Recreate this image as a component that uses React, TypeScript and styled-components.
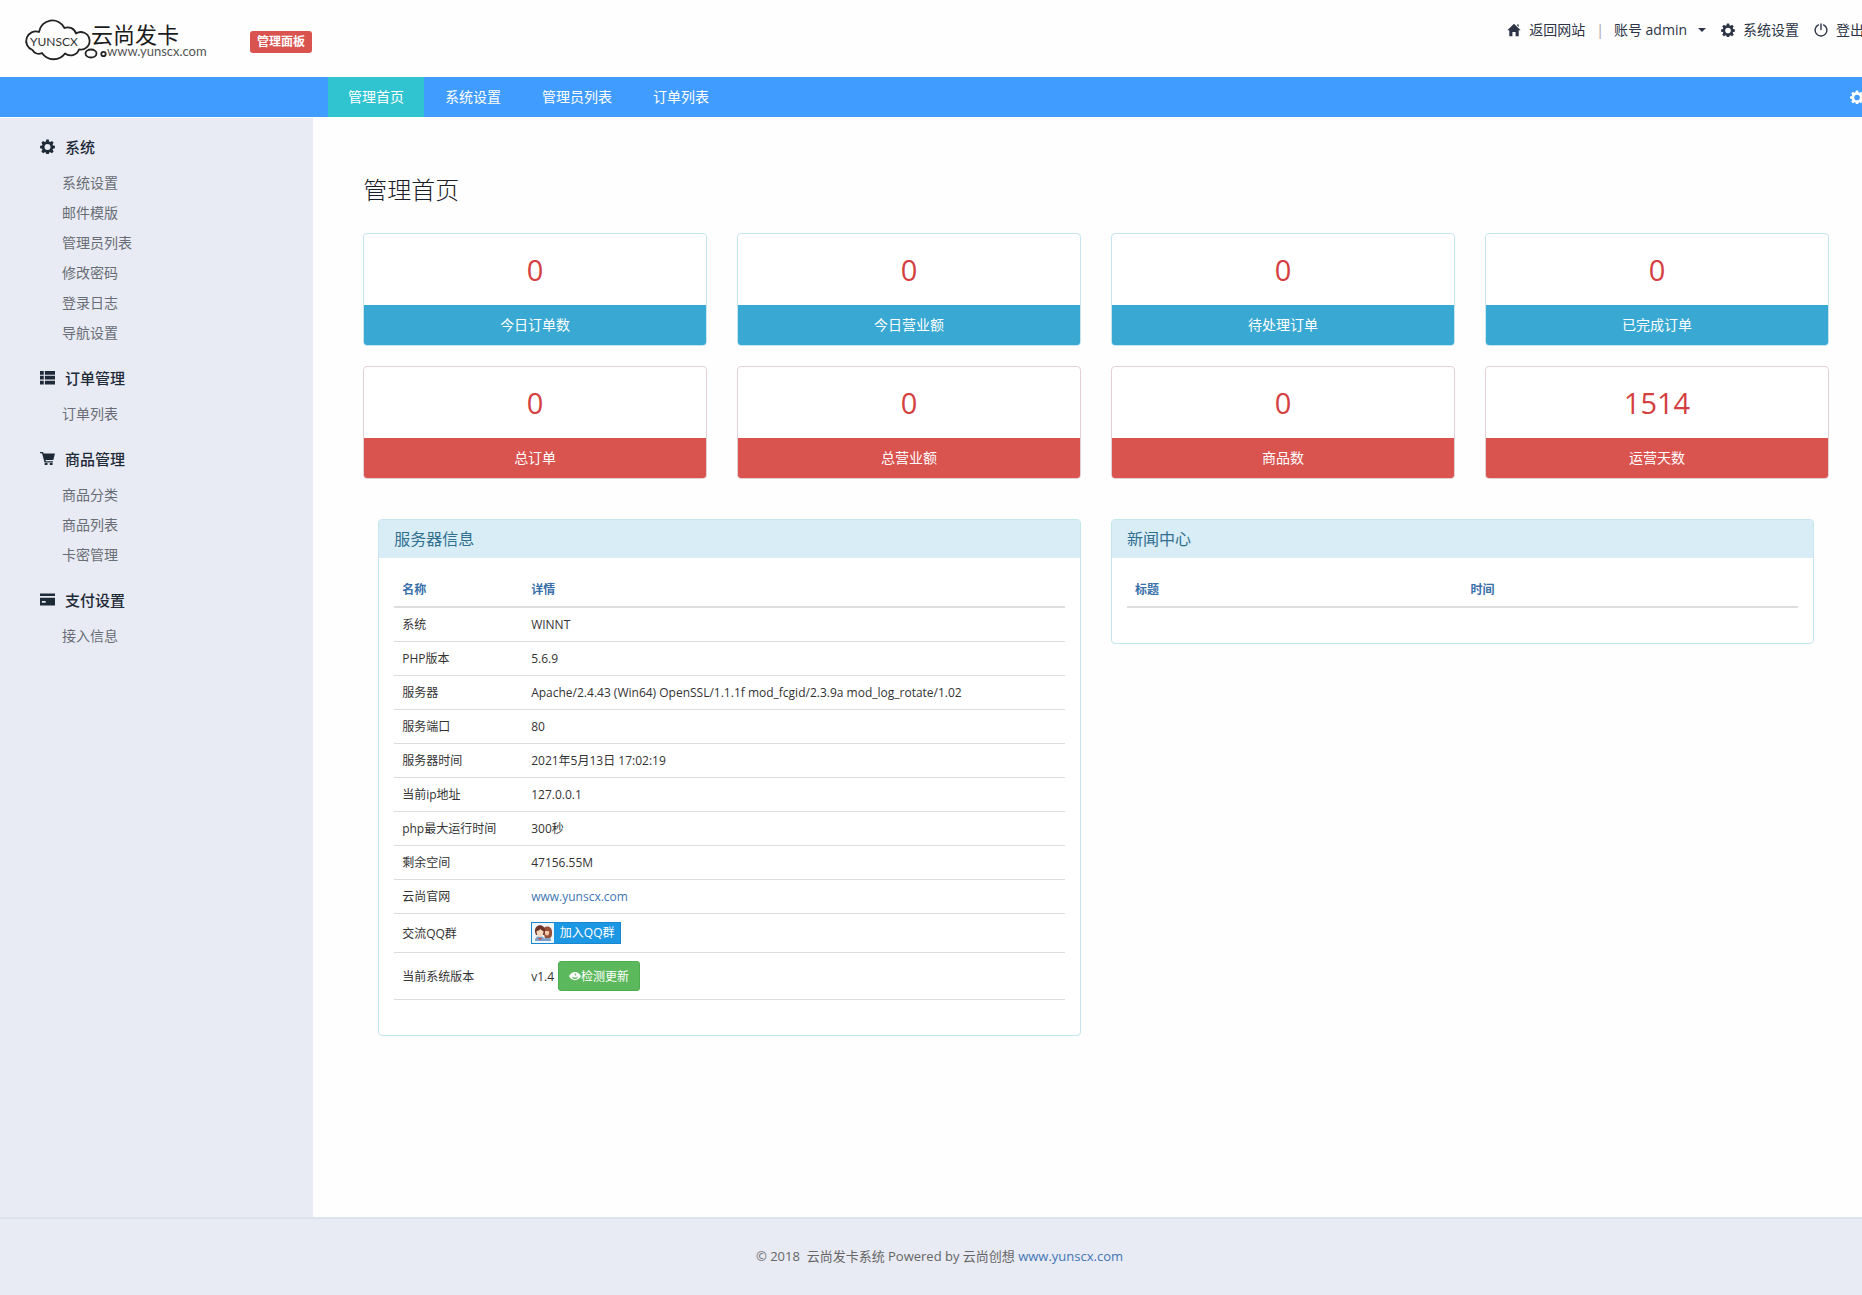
import React from "react";
import styled, { createGlobalStyle } from "styled-components";

const GlobalStyle = createGlobalStyle`
  *, *::before, *::after { box-sizing: border-box; }
  html, body { margin: 0; overflow-x: hidden; }
  body {
    background: #fefefe;
    color: #333;
    font-family: "Open Sans", "Noto Sans CJK SC", sans-serif;
    font-size: 14px;
    line-height: 20px;
  }
  ul { list-style: none; margin: 0; padding: 0; }
  h1, h2, p { margin: 0; font-weight: 400; }
  a { color: inherit; text-decoration: none; }
  button { font: inherit; cursor: pointer; }
`;

const Page = styled.div`
  display: flex;
  flex-direction: column;
  width: calc(100% + 17px);
  min-height: 100vh;
`;

const Header = styled.header`
  display: flex;
  align-items: flex-start;
  height: 77px;
  padding: 0 15px 0 24px;
`;

const LogoLink = styled.a`
  display: block;
  margin-top: 16px;
  height: 46px;
`;

const PanelTag = styled.span`
  margin: 31px 0 0 42px;
  padding: 0 7px;
  border-radius: 3px;
  background: #d9534f;
  color: #fff;
  font-size: 12px;
  font-weight: 700;
  line-height: 22px;
`;

const UserMenu = styled.ul`
  display: flex;
  align-items: center;
  margin-left: auto;
  padding-top: 20px;
  color: #2c3445;
  white-space: nowrap;
`;

const UserItem = styled.li<{ $gap?: number }>`
  display: flex;
  align-items: center;
  margin-left: ${(p) => p.$gap ?? 15}px;
`;

const UserLink = styled.a`
  display: flex;
  align-items: center;
  gap: 8px;
`;

const Divider = styled.span`
  color: #a9a0aa;
  line-height: 20px;
`;

const AccountButton = styled.button`
  display: flex;
  align-items: center;
  gap: 11px;
  padding: 0;
  border: 0;
  background: none;
  color: inherit;
`;

const Caret = styled.span`
  border: 4px solid transparent;
  border-top-color: currentColor;
  border-bottom: 0;
`;

const NavBar = styled.nav`
  display: flex;
  align-items: center;
  height: 40px;
  margin-bottom: 1px;
  padding: 0 15px 0 328px;
  background: #419cff;
  color: #fff;
`;

const Tabs = styled.ul`
  display: flex;
  gap: 1px;
`;

const Tab = styled.a<{ $active?: boolean }>`
  display: block;
  padding: 0 20px;
  line-height: 40px;
  background: ${(p) => (p.$active ? "#30c4d0" : "transparent")};
`;

const NavTool = styled.button`
  display: flex;
  margin-left: auto;
  padding: 0;
  border: 0;
  background: none;
  color: #fff;
`;

const Body = styled.div`
  display: grid;
  grid-template-columns: 1fr 5fr;
  flex: 1;
`;

const Sidebar = styled.aside`
  display: flex;
  flex-direction: column;
  gap: 15px;
  padding: 14px 0 30px 40px;
  background: #e8ebf3;
`;

const GroupTitle = styled.h2`
  display: flex;
  align-items: center;
  gap: 10px;
  height: 29px;
  margin-bottom: 7px;
  color: #1f2a38;
  font-size: 15px;
  font-weight: 500;
`;

const SideLink = styled.a`
  display: block;
  padding-left: 22px;
  color: #686d76;
  line-height: 30px;
`;

const Main = styled.main`
  min-width: 0;
  padding: 55px 50px 60px;
`;

const PageTitle = styled.h1`
  margin-bottom: 26px;
  color: #1c2029;
  font-size: 24px;
  font-weight: 300;
  line-height: 34px;
`;

const Stats = styled.section`
  display: grid;
  grid-template-columns: repeat(4, 1fr);
  gap: 20px 30px;
`;

const StatCard = styled.article<{ $red?: boolean }>`
  overflow: hidden;
  border: 1px solid ${(p) => (p.$red ? "#e4d0d5" : "#c4e4ee")};
  border-radius: 4px;
  background: #fff;
  text-align: center;
`;

const StatValue = styled.p`
  padding: 15px;
  color: #d43f3f;
  font-size: 29px;
  line-height: 41px;
`;

const StatLabel = styled.p<{ $red?: boolean }>`
  color: #fff;
  line-height: 40px;
  background: ${(p) => (p.$red ? "#d9534f" : "#39a9d3")};
`;

const Panels = styled.div`
  display: grid;
  grid-template-columns: 1fr 1fr;
  align-items: start;
  gap: 30px;
  padding: 40px 15px 0;
`;

const Panel = styled.section`
  border: 1px solid #c4e6ef;
  border-radius: 4px;
  background: #fff;
`;

const PanelTitle = styled.h2`
  padding: 0 15px;
  background: #d9edf7;
  border-radius: 3px 3px 0 0;
  color: #31708f;
  font-size: 16px;
  line-height: 38px;
`;

const PanelBody = styled.div`
  padding: 15px 15px 35px;
`;

const Table = styled.table`
  width: 100%;
  border-collapse: separate;
  border-spacing: 0;
  table-layout: fixed;
  font-size: 12px;
  line-height: 17px;
`;

const Th = styled.th<{ $width?: string }>`
  width: ${(p) => p.$width ?? "auto"};
  padding: 8px;
  border-bottom: 2px solid #ddd;
  color: #3a70aa;
  font-weight: 700;
  text-align: left;
`;

const Td = styled.td`
  padding: 8px;
  border-bottom: 1px solid #ddd;
  vertical-align: middle;
`;

const BlueLink = styled.a`
  color: #4276b5;
`;

const QQButton = styled.a`
  display: flex;
  width: 90px;
  height: 22px;
  border: 1px solid #1a86cd;
  background: #1c97e4;
  color: #fff;
  line-height: 20px;
`;

const QQText = styled.span`
  flex: 1;
  text-align: center;
`;

const VersionCell = styled.div`
  display: flex;
  align-items: center;
  gap: 4px;
`;

const UpdateButton = styled.button`
  display: flex;
  align-items: center;
  height: 30px;
  padding: 0 10px;
  border: 1px solid #4cae4c;
  border-radius: 3px;
  background: #5cb85c;
  color: #fff;
`;

const Footer = styled.footer`
  height: 78px;
  border-top: 2px solid #dde3ea;
  background: #e8ebf3;
  color: #666;
  font-size: 13px;
  line-height: 74px;
  text-align: center;
  white-space: pre;
`;

const glyphs = {
  home: <path d="M8 .8 15.6 8.4H13.4V15H9.8V10.4H6.2V15H2.6V8.4H.4ZM11.4 1.6h2v3l-2-2Z" />,
  cog: (
    <path
      fillRule="evenodd"
      d="M6.7.6h2.6l.4 2 1.3.5 1.7-1.1 1.9 1.9-1.2 1.7.5 1.3 2 .4v2.6l-2 .4-.5 1.2 1.2 1.8-1.9 1.8-1.7-1.1-1.3.5-.4 2H6.7l-.4-2-1.3-.5-1.7 1.1-1.9-1.8 1.2-1.8-.5-1.2-2-.4V7.300l2-.4.5-1.300L1.400 3.900 3.300 2 5 3.100l1.300-.5ZM8 5.400a3.200 3.200 0 1 0 0 6.400 3.200 3.200 0 0 0 0-6.400Z"
    />
  ),
  off: (
    <g fill="none" stroke="currentColor" strokeWidth="1.6" strokeLinecap="round">
      <path d="M8 1v6.500M5 2.200a6.700 6.700 0 1 0 6 0" />
    </g>
  ),
  list: <path d="M0 1h4v4H0ZM5.200 1H16v4H5.200ZM0 6.200h4v4H0ZM5.200 6.200H16v4H5.200ZM0 11.400h4v4H0ZM5.200 11.400H16v4H5.200Z" />,
  cart: (
    <path d="M0 1h3.200l.8 1.600H16L14.200 9.600H5.900l.3 1.200h7.600v1.400H4.800L2.200 2.400H0ZM5 12.800h3v2.200H5ZM10.400 12.800h3v2.200h-3Z" />
  ),
  card: <path fillRule="evenodd" d="M0 1.500h16v2.700H0ZM0 6h16v8.500H0ZM2 9.500v2h4v-2Z" />,
  eye: (
    <path
      fillRule="evenodd"
      d="M8 2.500c3.500 0 6.300 2.300 8 5.500-1.700 3.200-4.500 5.500-8 5.500S1.700 11.200 0 8c1.700-3.200 4.500-5.500 8-5.500ZM3 7.200C4.200 10.400 6 12 8 12s3.800-1.600 5-4.800C12 9 10.200 10 8 10S4 9 3 7.200ZM7 4.800l1.800 2.700 1.200-.9L8.600 4.500Z"
    />
  ),
};

type GlyphName = keyof typeof glyphs;

const Glyph = ({ name, size = 14 }: { name: GlyphName; size?: number }) => (
  <svg width={size} height={size} viewBox="0 0 16 16" fill="currentColor" aria-hidden="true">
    {glyphs[name]}
  </svg>
);

const Logo = () => (
  <svg width="184" height="46" viewBox="24 16 184 46" role="img" aria-label="云尚发卡 www.yunscx.com">
    <g fill="none" stroke="#222" strokeWidth="1.800" strokeLinejoin="round">
      <path d="M39 32A13.500 13.500 0 0 1 64.500 28A8.500 8.500 0 0 1 76 33.500A8.800 8.800 0 1 1 79 49.500A9 9 0 0 1 65 53.500A14 14 0 0 1 42 53A7 7 0 0 1 32.500 50A9.300 9.300 0 1 1 39 32Z" />
      <ellipse cx="91" cy="53.500" rx="5.500" ry="4" />
      <circle cx="103.500" cy="54" r="2.200" />
    </g>
    <text x="30" y="46" fontFamily="Lato, sans-serif" fontSize="12" fill="#333">
      YUNSCX
    </text>
    <text x="91" y="43" fontFamily="'Noto Sans CJK SC', sans-serif" fontSize="22" fill="#1c1c1c">
      云尚发卡
    </text>
    <text x="107" y="56" fontFamily="Lato, sans-serif" fontSize="13" fill="#555">
      www.yunscx.com
    </text>
  </svg>
);

const QQFaces = () => (
  <svg width="22" height="20" viewBox="0 0 22 20" aria-hidden="true">
    <path fill="#eef5fb" d="M0 0h22v20H0Z" />
    <path fill="#7d9fc8" d="M3 18c0-4 3-5 5-5s4 1 5 5ZM12 18c0-3 1-5 3-5s4 2 4 5Z" />
    <path fill="#9a4f38" d="M11 8c0-6 9-6 9 1 0 3 0 5-2 6h-5Z" />
    <path fill="#f3c9a8" d="M12.500 8h4.500c1 6-4.500 6-4.500 0Z" />
    <path fill="#6d3527" d="M3 9c-1-9 11-9 10 0l-1 3H4Z" />
    <path fill="#f8d9bd" d="M4.500 8c2 0 3-1 4-2 1 1 1.500 2 3 2 0 8-7 8-7 0Z" />
    <path fill="#c5473c" d="M6 15h4l-2 2Z" />
  </svg>
);

const groups: { title: string; icon: GlyphName; items: string[] }[] = [
  {
    title: "系统",
    icon: "cog",
    items: ["系统设置", "邮件模版", "管理员列表", "修改密码", "登录日志", "导航设置"],
  },
  { title: "订单管理", icon: "list", items: ["订单列表"] },
  { title: "商品管理", icon: "cart", items: ["商品分类", "商品列表", "卡密管理"] },
  { title: "支付设置", icon: "card", items: ["接入信息"] },
];

const tabs = ["管理首页", "系统设置", "管理员列表", "订单列表"];

const stats = [
  { value: "0", label: "今日订单数" },
  { value: "0", label: "今日营业额" },
  { value: "0", label: "待处理订单" },
  { value: "0", label: "已完成订单" },
  { value: "0", label: "总订单", red: true },
  { value: "0", label: "总营业额", red: true },
  { value: "0", label: "商品数", red: true },
  { value: "1514", label: "运营天数", red: true },
];

const serverInfo: [string, React.ReactNode][] = [
  ["系统", "WINNT"],
  ["PHP版本", "5.6.9"],
  ["服务器", "Apache/2.4.43 (Win64) OpenSSL/1.1.1f mod_fcgid/2.3.9a mod_log_rotate/1.02"],
  ["服务端口", "80"],
  ["服务器时间", "2021年5月13日 17:02:19"],
  ["当前ip地址", "127.0.0.1"],
  ["php最大运行时间", "300秒"],
  ["剩余空间", "47156.55M"],
  ["云尚官网", <BlueLink href="#site">www.yunscx.com</BlueLink>],
  [
    "交流QQ群",
    <QQButton href="#qq">
      <QQFaces />
      <QQText>加入QQ群</QQText>
    </QQButton>,
  ],
  [
    "当前系统版本",
    <VersionCell>
      v1.4
      <UpdateButton type="button">
        <Glyph name="eye" size={12} />
        检测更新
      </UpdateButton>
    </VersionCell>,
  ],
];

export default function App() {
  return (
    <>
      <GlobalStyle />
      <Page>
        <Header>
          <LogoLink href="#home">
            <Logo />
          </LogoLink>
          <PanelTag>管理面板</PanelTag>
          <UserMenu>
            <UserItem>
              <UserLink href="#site">
                <Glyph name="home" />
                返回网站
              </UserLink>
            </UserItem>
            <UserItem $gap={11}>
              <Divider>|</Divider>
            </UserItem>
            <UserItem $gap={10}>
              <AccountButton type="button">
                账号 admin
                <Caret />
              </AccountButton>
            </UserItem>
            <UserItem>
              <UserLink href="#settings">
                <Glyph name="cog" />
                系统设置
              </UserLink>
            </UserItem>
            <UserItem>
              <UserLink href="#logout">
                <Glyph name="off" />
                登出
              </UserLink>
            </UserItem>
          </UserMenu>
        </Header>

        <NavBar>
          <Tabs>
            {tabs.map((tab, i) => (
              <li key={tab}>
                <Tab href={`#tab-${i}`} $active={i === 0}>
                  {tab}
                </Tab>
              </li>
            ))}
          </Tabs>
          <NavTool type="button" aria-label="设置">
            <Glyph name="cog" />
          </NavTool>
        </NavBar>

        <Body>
          <Sidebar>
            {groups.map((group) => (
              <section key={group.title}>
                <GroupTitle>
                  <Glyph name={group.icon} size={15} />
                  {group.title}
                </GroupTitle>
                <ul>
                  {group.items.map((item) => (
                    <li key={item}>
                      <SideLink href="#menu">{item}</SideLink>
                    </li>
                  ))}
                </ul>
              </section>
            ))}
          </Sidebar>

          <Main>
            <PageTitle>管理首页</PageTitle>
            <Stats>
              {stats.map((stat) => (
                <StatCard key={stat.label} $red={stat.red}>
                  <StatValue>{stat.value}</StatValue>
                  <StatLabel $red={stat.red}>{stat.label}</StatLabel>
                </StatCard>
              ))}
            </Stats>

            <Panels>
              <Panel>
                <PanelTitle>服务器信息</PanelTitle>
                <PanelBody>
                  <Table>
                    <thead>
                      <tr>
                        <Th $width="129px">名称</Th>
                        <Th>详情</Th>
                      </tr>
                    </thead>
                    <tbody>
                      {serverInfo.map(([name, value]) => (
                        <tr key={name}>
                          <Td>{name}</Td>
                          <Td>{value}</Td>
                        </tr>
                      ))}
                    </tbody>
                  </Table>
                </PanelBody>
              </Panel>

              <Panel>
                <PanelTitle>新闻中心</PanelTitle>
                <PanelBody>
                  <Table>
                    <thead>
                      <tr>
                        <Th $width="50%">标题</Th>
                        <Th>时间</Th>
                      </tr>
                    </thead>
                  </Table>
                </PanelBody>
              </Panel>
            </Panels>
          </Main>
        </Body>

        <Footer>
          {"© 2018  云尚发卡系统 Powered by 云尚创想 "}
          <BlueLink href="#site">www.yunscx.com</BlueLink>
        </Footer>
      </Page>
    </>
  );
}
